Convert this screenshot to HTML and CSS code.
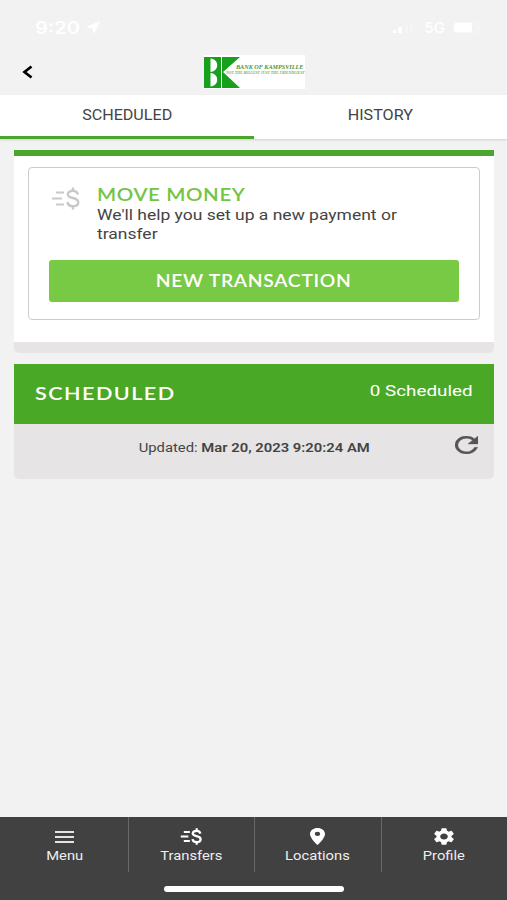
FILE: index.html
```html
<!DOCTYPE html>
<html lang="en">
<head>
    <meta charset="UTF-8">
    <meta name="viewport" content="width=device-width, initial-scale=1.0">
    <title>Transfers</title>
    <link rel="stylesheet" href="styles.css">
</head>
<body>
    <div class="status-bar">
        <div class="status-time">
            <span class="wide">9:20</span>
            <svg width="14" height="13" viewBox="0 0 14 13"><path d="M14 0L8 13L6.500 7.500L0 6Z" fill="#fff"/></svg>
        </div>
        <div class="status-right">
            <svg width="24" height="10" viewBox="0 0 24 10">
                <path d="M0 7h3v3H0zM5 4h4v6H5z" fill="#fff"/>
                <path d="M12 2h3v8h-3zM17 0h3v10h-3z" fill="#f5f5f5"/>
            </svg>
            <span class="wide">5G</span>
            <svg width="28" height="11" viewBox="0 0 28 11">
                <rect x="0.500" y="0.500" width="24" height="10" rx="3" fill="none" stroke="#f7f7f7"/>
                <rect x="1" y="1" width="18" height="9" rx="2" fill="#fff"/>
                <path d="M26 4v4" stroke="#f7f7f7"/>
            </svg>
        </div>
    </div>

    <div class="header">
        <svg class="back" width="11" height="14" viewBox="0 0 11 14"><path d="M9.500 1.500L2.500 7L9.500 12.500" fill="none" stroke="#000" stroke-width="2.700"/></svg>
        <div class="logo">
            <svg width="36" height="31" viewBox="0 0 36 31">
                <path d="M0 0H17V31H0Z" fill="#16a01c"/>
                <path d="M6.500 1.500C15.500 2 15.500 14.500 6.500 15ZM6.500 16C15.500 16.500 15.500 29 6.500 29.500Z" fill="#fff"/>
                <path d="M18 0H36L19 15L36 31H18Z" fill="#16a01c"/>
            </svg>
            <div class="logo-text">
                <div class="logo-name"><span>BANK OF KAMPSVILLE</span></div>
                <div class="logo-motto"><span>NOT THE BIGGEST JUST THE FRIENDLIEST</span></div>
            </div>
        </div>
    </div>

    <div class="tabs">
        <div class="tab active"><span class="tab-scheduled">SCHEDULED</span></div>
        <div class="tab"><span class="tab-history">HISTORY</span></div>
    </div>

    <div class="content">
        <div class="card move-card">
            <div class="move-box">
                <div class="move-info">
                    <svg class="move-icon" width="29" height="23" viewBox="0 0 29 23" fill="none" stroke="#c9c9c9" stroke-width="2">
                        <path d="M5 5.500h8M1 11.500h10M5 17.500h8"/>
                        <path d="M27 7.500C26 4.500 24 3.800 22 3.800C19 3.800 16.800 5.300 16.800 7.500C16.800 12.500 27.200 9.500 27.200 15.200C27.200 17.700 25 19.200 22 19.200C19 19.200 16.800 17.700 16.500 15M22 0.500v3.300M22 19.200v3.300" stroke-width="2.400"/>
                    </svg>
                    <div>
                        <div class="move-title"><span>MOVE MONEY</span></div>
                        <div class="move-text"><span class="line-one">We'll help you set up a new payment or</span><br><span class="line-two">transfer</span></div>
                    </div>
                </div>
                <div class="button"><span>NEW TRANSACTION</span></div>
            </div>
        </div>

        <div class="card">
            <div class="list-header">
                <span class="list-title">SCHEDULED</span>
                <span class="list-count">0 Scheduled</span>
            </div>
            <div class="list-footer">
                <span class="updated">Updated: <b>Mar 20, 2023 9:20:24 AM</b></span>
                <svg class="refresh" width="23" height="18" viewBox="4 4 16 16" preserveAspectRatio="none"><path d="M17.650 6.350A7.958 7.958 0 0 0 12 4a8 8 0 1 0 7.730 10h-2.080A6 6 0 1 1 12 6c1.660 0 3.140.690 4.220 1.780L13 11h7V4z" fill="#555" stroke="#555" stroke-width="0.300"/></svg>
            </div>
        </div>
    </div>

    <div class="nav">
        <div class="nav-item">
            <svg width="19" height="17" viewBox="0 0 19 17"><path d="M0 4h19M0 9h19M0 14h19" stroke="#e4e4e4" stroke-width="2"/></svg>
            <span>Menu</span>
        </div>
        <div class="nav-item">
            <svg width="22" height="17" viewBox="0 0 29 23" preserveAspectRatio="none" fill="none" stroke="#fff" stroke-width="2.600">
                <path d="M5 5.500h8M1 11.500h10M5 17.500h8"/>
                <path d="M27 7.500C26 4.500 24 3.800 22 3.800C19 3.800 16.800 5.300 16.800 7.500C16.800 12.500 27.200 9.500 27.200 15.200C27.200 17.700 25 19.200 22 19.200C19 19.200 16.800 17.700 16.500 15M22 0.500v3.300M22 19.200v3.300" stroke-width="3"/>
            </svg>
            <span>Transfers</span>
        </div>
        <div class="nav-item">
            <svg width="15" height="17" viewBox="5 2 14 20" preserveAspectRatio="none"><path d="M12 2C8.130 2 5 5.130 5 9c0 5.250 7 13 7 13s7-7.750 7-13c0-3.870-3.130-7-7-7zm0 9.500a2.500 2.500 0 0 1 0-5 2.500 2.500 0 0 1 0 5z" fill="#fff"/></svg>
            <span>Locations</span>
        </div>
        <div class="nav-item">
            <svg width="20" height="17" viewBox="2.500 2 19 20" preserveAspectRatio="none"><path d="M19.140 12.940c.040-.300.060-.610.060-.940 0-.320-.020-.640-.070-.940l2.030-1.580a.490.490 0 0 0 .120-.610l-1.920-3.320a.488.488 0 0 0-.590-.220l-2.390.960c-.500-.380-1.030-.700-1.620-.940l-.360-2.540a.484.484 0 0 0-.480-.410h-3.840c-.240 0-.430.170-.470.410l-.360 2.540c-.590.240-1.130.570-1.620.940l-2.390-.960c-.220-.080-.470 0-.590.220L2.740 8.870c-.120.210-.080.470.120.610l2.030 1.580c-.050.300-.090.630-.090.940s.020.640.070.940l-2.030 1.580a.490.490 0 0 0-.120.610l1.920 3.320c.120.220.370.290.590.220l2.390-.960c.500.380 1.030.700 1.620.940l.360 2.540c.050.240.240.410.480.410h3.840c.240 0 .440-.170.470-.410l.360-2.540c.590-.240 1.130-.560 1.620-.940l2.390.960c.220.080.470 0 .590-.220l1.920-3.320c.120-.220.070-.470-.120-.610l-2.010-1.580zM12 15.600c-1.980 0-3.600-1.620-3.600-3.600s1.620-3.600 3.600-3.600 3.600 1.620 3.600 3.600-1.620 3.600-3.600 3.600z" fill="#fff"/></svg>
            <span>Profile</span>
        </div>
        <div class="home-indicator"></div>
    </div>
</body>
</html>
```

FILE: styles.css
```css
* {
    box-sizing: border-box;
}
body {
    margin: 0;
    height: 900px;
    display: flex;
    flex-direction: column;
    overflow: hidden;
    background-color: #f2f2f2;
    font-family: Roboto, "Liberation Sans", sans-serif;
    color: #444;
}
svg {
    display: block;
    flex: none;
}
span {
    display: inline-block;
    white-space: nowrap;
}

/* Status bar */
.status-bar {
    height: 50px;
    padding: 5px 26px 0 35px;
    display: flex;
    align-items: center;
    justify-content: space-between;
    color: #fff;
    font-family: Inter, sans-serif;
    font-size: 17px;
    font-weight: 600;
}
.status-time {
    display: flex;
    align-items: center;
    gap: 13px;
}
.status-right {
    display: flex;
    align-items: center;
    gap: 8px;
    font-size: 15px;
    font-weight: 500;
}
.status-time .wide {
    transform: scaleX(1.18);
    transform-origin: left;
}

/* Header */
.header {
    height: 45px;
    padding: 0 202px 0 22px;
    display: flex;
    align-items: center;
    justify-content: space-between;
}
.back {
    margin-top: -1px;
}
.logo {
    width: 101px;
    height: 34px;
    margin-top: -1px;
    padding-top: 2px;
    display: flex;
    background: white;
}
.logo-text {
    width: 70px;
    margin-left: -4px;
    padding-top: 7px;
    font-family: "Liberation Serif", serif;
    font-style: italic;
    font-weight: bold;
    color: #3d9a41;
}
.logo-name {
    height: 6px;
    font-size: 5.500px;
    line-height: 7px;
}
.logo-name span {
    transform: scaleX(1.12);
    transform-origin: left;
}
.logo-motto {
    height: 5px;
    margin-left: -10px;
    font-size: 3.500px;
    line-height: 6px;
    color: #6fae72;
}
.logo-motto span {
    transform: scaleX(1.08);
    transform-origin: left;
}

/* Tabs */
.tabs {
    height: 44px;
    display: flex;
    background: white;
    box-shadow: 0 1px 2px rgba(0,0,0,0.15);
}
.tab {
    flex: 1;
    padding-top: 11px;
    font-size: 14px;
    line-height: 18px;
    text-align: center;
}
.tab.active {
    border-bottom: 3px solid #4aa52e;
}
.tab-scheduled, .tab-history {
    transform: scaleX(1.15);
}

/* Cards */
.content {
    flex: 1;
    padding: 11px 13px 0 14px;
}
.card {
    margin-bottom: 11px;
    background: #e6e4e5;
    border-radius: 0 0 5px 5px;
    overflow: hidden;
}
.move-card {
    height: 203px;
    border-top: 6px solid #4aa52e;
    border-bottom: 11px solid #e6e4e5;
    padding: 11px 14px 0;
    background: white;
}
.move-box {
    height: 153px;
    padding: 17px 20px 0;
    border: 1px solid #ccc;
    border-radius: 4px;
}
.move-info {
    height: 75px;
    display: flex;
    gap: 17px;
}
.move-icon {
    margin: 2px 0 0 2px;
}
.move-title {
    height: 21px;
    font-family: Lato, sans-serif;
    font-size: 16.500px;
    line-height: 21px;
    font-weight: 600;
    letter-spacing: 0.500px;
    color: #74c443;
}
.move-title span {
    transform: scaleX(1.24);
    transform-origin: left;
}
.move-text {
    font-size: 14.500px;
    line-height: 19px;
}
.move-text span {
    transform: scaleX(1.206);
    transform-origin: left;
}
.button {
    height: 42px;
    border-radius: 3px;
    background: #78c943;
    color: white;
    font-family: Lato, sans-serif;
    font-size: 16.500px;
    line-height: 43px;
    font-weight: 600;
    letter-spacing: 0.600px;
    text-align: center;
}
.button span {
    transform: scaleX(1.17);
}
.list-header {
    height: 60px;
    padding: 0 21px;
    display: flex;
    justify-content: space-between;
    background: #4aa827;
    color: white;
    line-height: 54px;
}
.list-title {
    padding-top: 2px;
    font-family: Lato, sans-serif;
    font-size: 18px;
    font-weight: 600;
    letter-spacing: 1.200px;
    transform: scaleX(1.2);
    transform-origin: left;
}
.list-count {
    font-size: 15.500px;
    transform: scaleX(1.215);
    transform-origin: right;
}
.list-footer {
    height: 55px;
    padding: 12px 16px 0 24px;
    display: flex;
}
.updated {
    flex: 1;
    padding-left: 13px;
    font-size: 12.500px;
    line-height: 23px;
    text-align: center;
    transform: scaleX(1.185);
}
.updated b {
    font-weight: 600;
}

/* Bottom navigation */
.nav {
    position: relative;
    height: 83px;
    padding-left: 2px;
    display: flex;
    background: #414141;
    color: #eee;
}
.nav-item {
    flex: 1;
    height: 55px;
    padding-top: 11px;
    display: flex;
    flex-direction: column;
    align-items: center;
    gap: 2px;
    font-size: 12.500px;
    line-height: 17px;
    border-right: 1px solid #686868;
}
.nav-item:nth-child(4) {
    border-right: none;
}
.nav-item span {
    transform: scaleX(1.18);
}
.home-indicator {
    position: absolute;
    left: 164px;
    bottom: 8px;
    width: 180px;
    height: 6px;
    border-radius: 3px;
    background: white;
}
```
